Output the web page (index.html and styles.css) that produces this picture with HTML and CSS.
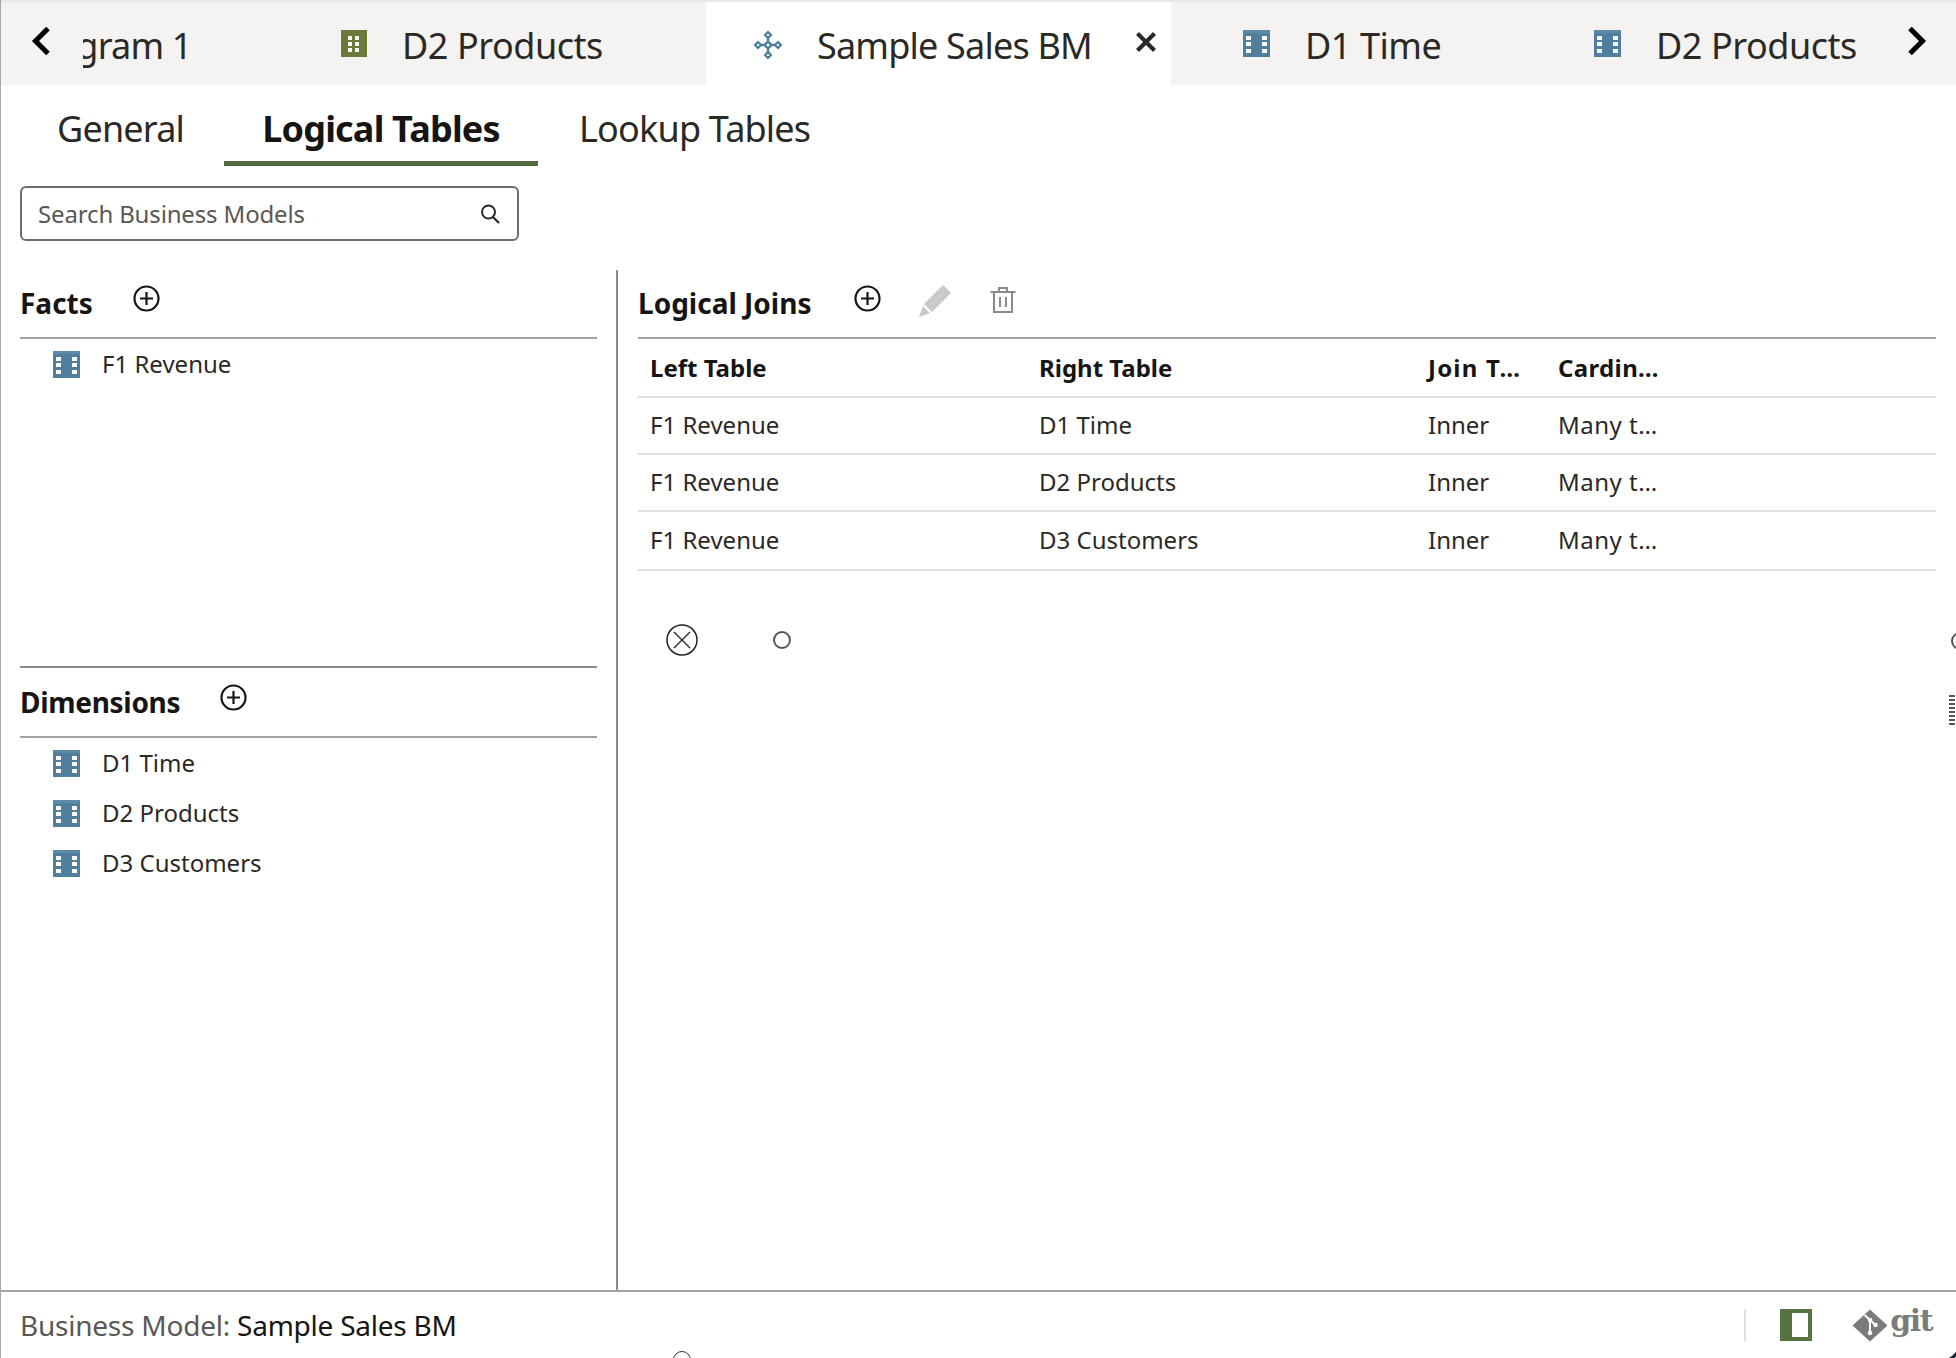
FILE: index.html
```html
<!DOCTYPE html>
<html lang="en">
<head>
<meta charset="utf-8">
<title>Sample Sales BM</title>
<link rel="stylesheet" href="styles.css">
</head>
<body>
<svg class="defs" width="0" height="0" aria-hidden="true">
  <defs>
    <symbol id="tbl" viewBox="0 0 27 27">
      <rect width="27" height="27" fill="#4f7f9c"/>
      <rect y="0" width="27" height="3" fill="#5d8aa6"/>
      <path fill="#fff" d="M3 6h5v4H3zM19 6h5v4h-5zM3 12h5v4H3zM19 12h5v4h-5zM3 19h5v4H3zM19 19h5v4h-5z"/>
    </symbol>
    <symbol id="plus" viewBox="0 0 27 27">
      <circle cx="13.500" cy="13.500" r="12" fill="none" stroke="#161513" stroke-width="2.200"/>
      <path d="M13.500 7v13M7 13.500h13" stroke="#161513" stroke-width="2.200" fill="none"/>
    </symbol>
  </defs>
</svg>
<div class="app">
  <header class="tabbar">
    <button class="arrow arrow-left" type="button" aria-label="Previous">
      <svg width="24" height="32" viewBox="0 0 24 32"><path d="M19 3.500 6.500 16 19 28.500" fill="none" stroke="#000" stroke-width="5"/></svg>
    </button>
    <div class="tab tab-clipped"><span class="clip-text">Diagram 1</span></div>
    <div class="tab tab-d2a">
      <svg class="tab-icon-o" width="27" height="27" viewBox="0 0 27 27"><rect x="1" y="0" width="26" height="27" fill="#6b7a3c"/><path fill="#fff" d="M8 6h4v4H8zM15 6h4v4h-4zM8 12h4v4H8zM15 12h4v4h-4zM8 18h4v4H8zM15 18h4v4h-4z"/></svg>
      <span>D2 Products</span>
    </div>
    <div class="tab tab-active">
      <svg class="tab-icon-bm" width="30" height="30" viewBox="0 0 30 30">
        <g fill="none" stroke="#4f7f9c" stroke-width="2.400">
          <path d="M15 4.500v21M4.500 15h21"/>
        </g>
        <g fill="#fff" stroke="#4f7f9c" stroke-width="2.200">
          <path d="m15 2 3 3-3 3-3-3zM15 22l3 3-3 3-3-3zM5 12l3 3-3 3-3-3zM25 12l3 3-3 3-3-3z"/>
          <circle cx="15" cy="15" r="2.600"/>
        </g>
      </svg>
      <span class="tab-label">Sample Sales BM</span>
      <svg class="tab-close" width="22" height="22" viewBox="0 0 22 22"><path d="m2.500 2.500 17 17M19.500 2.500l-17 17" stroke="#2b2926" stroke-width="4.200" fill="none"/></svg>
    </div>
    <div class="tab tab-d1">
      <svg class="tbl-icon" width="27" height="27"><use href="#tbl"/></svg>
      <span>D1 Time</span>
    </div>
    <div class="tab tab-d2b">
      <svg class="tbl-icon" width="27" height="27"><use href="#tbl"/></svg>
      <span>D2 Products</span>
    </div>
    <button class="arrow arrow-right" type="button" aria-label="Next">
      <svg width="24" height="32" viewBox="0 0 24 32"><path d="M5 3.500 17.500 16 5 28.500" fill="none" stroke="#000" stroke-width="5"/></svg>
    </button>
  </header>

  <nav class="subtabs">
    <a class="subtab subtab-general">General</a>
    <a class="subtab subtab-active">Logical Tables</a>
    <a class="subtab subtab-lookup">Lookup Tables</a>
  </nav>

  <div class="search">
    <span class="search-text">Search Business Models</span>
    <svg width="22" height="22" viewBox="0 0 22 22"><circle cx="9.500" cy="9" r="6.500" fill="none" stroke="#2b2926" stroke-width="2"/><path d="m14 14 6 6" stroke="#2b2926" stroke-width="2.200"/></svg>
  </div>

  <main class="panes">
    <aside class="left">
      <section class="facts">
        <div class="head">
          <h2>Facts</h2>
          <svg class="add add-facts" width="27" height="27"><use href="#plus"/></svg>
        </div>
        <ul class="tree">
          <li><svg class="tbl-icon" width="27" height="27"><use href="#tbl"/></svg><span>F1 Revenue</span></li>
        </ul>
      </section>
      <section class="dims">
        <div class="head">
          <h2>Dimensions</h2>
          <svg class="add add-dims" width="27" height="27"><use href="#plus"/></svg>
        </div>
        <ul class="tree">
          <li><svg class="tbl-icon" width="27" height="27"><use href="#tbl"/></svg><span>D1 Time</span></li>
          <li><svg class="tbl-icon" width="27" height="27"><use href="#tbl"/></svg><span>D2 Products</span></li>
          <li><svg class="tbl-icon" width="27" height="27"><use href="#tbl"/></svg><span>D3 Customers</span></li>
        </ul>
      </section>
    </aside>
    <section class="right">
      <div class="head">
        <h2>Logical Joins</h2>
        <svg class="add add-joins" width="27" height="27"><use href="#plus"/></svg>
        <svg class="pencil" width="34" height="34" viewBox="0 0 34 34"><path fill="#c9c9c9" d="M25 1l8 8-19 19-8-8zM5 22l7 7-11 4z"/></svg>
        <svg class="trash" width="28" height="28" viewBox="0 0 28 28"><path d="M1.500 6h25M10 6V2h8v4M5 6v20h18V6M11 11v10M17 11v10" fill="none" stroke="#8c8a87" stroke-width="2"/></svg>
      </div>
      <table class="joins">
        <colgroup><col class="c1"><col class="c2"><col class="c3"><col class="c4"><col></colgroup>
        <thead>
          <tr><th>Left Table</th><th>Right Table</th><th class="th-join">Join T…</th><th class="th-card">Cardin…</th><th></th></tr>
        </thead>
        <tbody>
          <tr><td>F1 Revenue</td><td>D1 Time</td><td>Inner</td><td class="td-card">Many t…</td><td></td></tr>
          <tr><td>F1 Revenue</td><td>D2 Products</td><td>Inner</td><td class="td-card">Many t…</td><td></td></tr>
          <tr><td>F1 Revenue</td><td>D3 Customers</td><td>Inner</td><td class="td-card">Many t…</td><td></td></tr>
        </tbody>
      </table>
    </section>
  </main>

  <footer class="status">
    <span class="status-label">Business Model: <b>Sample Sales BM</b></span>
    <span class="status-tools">
      <i class="sep"></i>
      <svg class="panel" width="32" height="32" viewBox="0 0 32 32"><rect width="32" height="32" fill="#56733f"/><rect x="12" y="4" width="16" height="24" fill="#fff"/></svg>
      <span class="git">
        <svg width="36" height="33" viewBox="0 0 36 33"><path fill="#7b7b7b" d="M18 0.500 35.500 16.500 18 32.500 0.500 16.500 12.500 5.500z"/><path d="M12.500 6 23 15.500M18 11V25" stroke="#fff" stroke-width="2" fill="none"/><circle cx="18" cy="11" r="2.300" fill="#fff"/><circle cx="23.500" cy="16" r="2.300" fill="#fff"/><circle cx="18" cy="24" r="2.300" fill="#fff"/></svg>
        <b>git</b>
      </span>
    </span>
  </footer>

  <svg class="mark mark-x" width="32" height="32" viewBox="0 0 32 32"><circle cx="16" cy="16" r="15" fill="#fff" stroke="#222" stroke-width="1.500"/><path d="m8 8 16 16M24 8 8 24" stroke="#333" stroke-width="1.500"/></svg>
  <span class="mark mark-dot"></span>
  <span class="mark mark-edge"></span>
  <span class="mark mark-grip"></span>
  <span class="mark mark-bottom"></span>
  <span class="mark mark-corner"></span>
</div>
</body>
</html>
```
FILE: styles.css
```css
* { box-sizing: border-box; }
html, body { margin: 0; padding: 0; background: #fff; }
body { font-family: "Noto Sans", "Open Sans", sans-serif; color: #161513; }
.defs { position: absolute; }
.app {
  position: relative;
  width: 1956px;
  height: 1358px;
  overflow: hidden;
  display: flex;
  flex-direction: column;
  border-left: 1px solid #aaa6a1;
  padding-left: 1px;
}

/* top tabs */
.tabbar {
  height: 85px;
  flex: none;
  display: flex;
  align-items: stretch;
  background: #f4f3f1;
  border-top: 2px solid #e9e8e6;
  margin-left: -1px;
  font-size: 36px;
  letter-spacing: -0.8px;
  color: #2b2926;
}
.arrow {
  border: 0;
  padding: 0;
  background: none;
  flex: none;
  display: flex;
  align-items: flex-start;
  padding-top: 23px;
}
.arrow-left { width: 82px; padding-left: 28px; }
.arrow-right { width: 101px; padding-left: 50px; }
.tab { flex: none; display: flex; align-items: center; overflow: hidden; white-space: nowrap; padding-top: 4px; }
.tab svg { flex: none; }
.tab-clipped { width: 255px; }
.clip-text { margin-left: -60px; }
.tab-d2a { width: 368px; padding-left: 2px; }
.tab-d2a span { margin-left: 35px; letter-spacing: -0.45px; }
.tab-active { width: 465px; background: #fff; padding-left: 47px; }
.tab-label { margin-left: 34px; margin-right: 43px; }
.tab-d1 { width: 351px; padding-left: 72px; }
.tab-d1 span { margin-left: 35px; letter-spacing: -0.45px; }
.tab-d2b { width: 333px; padding-left: 72px; overflow: visible; }
.tab-d2a svg, .tab-d1 svg, .tab-d2b svg { margin-bottom: 4px; }
.tab-active svg { margin-bottom: 2px; }
.tab-active .tab-close { margin-bottom: 8px; }
.tab-d2b span { margin-left: 35px; letter-spacing: -0.45px; }

/* sub tabs */
.subtabs {
  flex: none;
  height: 81px;
  display: flex;
  margin-left: 20px;
  font-size: 36px;
  letter-spacing: -0.8px;
  color: #2b2926;
}
.subtab { display: flex; align-items: center; height: 81px; padding-top: 6px; }
.subtab-general { width: 202px; padding-left: 35px; }
.subtab-active {
  width: 314px;
  justify-content: center;
  font-weight: 700;
  color: #161513;
  border-bottom: 5px solid #4f6b3f;
  padding-top: 11px;
}
.subtab-lookup { margin-left: 41px; }

/* search */
.search {
  flex: none;
  width: 499px;
  height: 55px;
  margin: 20px 0 0 18px;
  padding: 0 16px 0 16px;
  display: flex;
  align-items: center;
  justify-content: space-between;
  border: 2px solid #6f6c68;
  border-radius: 6px;
  font-size: 24px;
  letter-spacing: -0.15px;
  color: #5a5855;
}

/* panes */
.panes { flex: none; height: 1020px; margin-top: 29px; display: flex; }
.left { width: 616px; flex: none; display: flex; flex-direction: column; border-right: 2px solid #8f8b86; }
.facts { height: 396px; flex: none; }
.dims { flex: 1; position: relative; }
.dims::before { content: ""; position: absolute; left: 18px; right: 19px; top: 0; height: 2px; background: #8f8b86; }
.left .head { margin: 0 19px 0 18px; }
.dims .head { height: 72px; padding-top: 3px; }
.dims h2 { letter-spacing: -0.3px; }
.head {
  height: 69px;
  display: flex;
  align-items: center;
  position: relative;
  border-bottom: 2px solid #a5a19c;
}
h2 { margin: 0; font-size: 28px; font-weight: 700; line-height: 36px; padding-bottom: 2px; color: #161513; }
.add { margin-bottom: 10px; }
.add-facts { margin-left: 40px; }
.add-dims { margin-left: 40px; }
.add-joins { margin-left: 43px; }
.pencil { margin-left: 37px; margin-bottom: 6px; }
.trash { margin-left: 37px; margin-bottom: 8px; }
.tree { list-style: none; margin: 0; padding: 0 0 0 51px; }
.tree li { height: 50px; display: flex; align-items: center; font-size: 24px; color: #2b2926; }
.tree span { margin-left: 22px; padding-bottom: 2px; }

.right { flex: 1; min-width: 0; padding: 0 20px 0 20px; }
.joins { width: 100%; border-collapse: collapse; table-layout: fixed; font-size: 24px; }
.c1, .c2 { width: 389px; }
.c3 { width: 130px; }
.c4 { width: 130px; }
.joins th, .joins td { padding: 0 0 0 12px; text-align: left; white-space: nowrap; border-bottom: 2px solid #e2e1df; color: #2b2926; }
.joins th { height: 58px; font-weight: 700; color: #161513; }
.joins td { height: 57px; padding-bottom: 3px; }
.joins tr:last-child td { height: 59px; }
.joins .th-join { letter-spacing: 1.2px; }
.joins .th-card { letter-spacing: 0.35px; }
.joins .td-card { letter-spacing: 0.5px; }

/* status */
.status {
  flex: 1;
  display: flex;
  align-items: center;
  justify-content: space-between;
  border-top: 2px solid #a5a19c;
  margin-left: -2px;
  padding: 0 24px 0 20px;
  font-size: 28px;
  letter-spacing: -0.23px;
  color: #5a5855;
}
.status b { font-weight: 400; color: #161513; }
.status-tools { display: flex; align-items: center; }
.sep { width: 2px; height: 32px; background: #e0dfdd; margin-right: 34px; }
.git { display: flex; align-items: center; margin-left: 40px; color: #7b7b7b; }
.git b { font-family: "DejaVu Serif", "Liberation Serif", serif; font-weight: 700; font-size: 30px; color: #7b7b7b; margin-left: 2px; letter-spacing: -1.5px; line-height: 32px; padding-bottom: 8px; }

/* marks floating over the page */
.mark { position: absolute; display: block; box-sizing: border-box; }
.mark-x { left: 665px; top: 624px; }
.mark-dot { left: 772px; top: 631px; width: 18px; height: 18px; border: 2px solid #555; border-radius: 50%; }
.mark-edge { left: 1950px; top: 632px; width: 18px; height: 18px; border: 2px solid #555; border-radius: 50%; }
.mark-grip { left: 1948px; top: 695px; width: 6px; height: 32px; background: repeating-linear-gradient(to bottom, #555 0 2px, #fff 2px 4px); }
.mark-bottom { left: 672px; top: 1351px; width: 18px; height: 18px; border: 1.500px solid #333; border-radius: 50%; background: #fff; }
.mark-corner { left: 1940px; top: 1342px; width: 20px; height: 20px; border-right: 3px solid #1c2b3a; border-bottom: 3px solid #1c2b3a; border-radius: 0 0 18px 0; }
```
